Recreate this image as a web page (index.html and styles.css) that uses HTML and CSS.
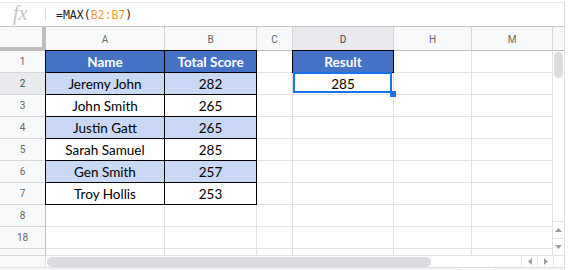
FILE: index.html
```html
<!DOCTYPE html>
<html lang="en">
<head>
  <meta charset="UTF-8">
  <meta name="viewport" content="width=device-width, initial-scale=1.0">
  <title>MAX Function</title>
  <link rel="stylesheet" href="styles.css">
</head>
<body>
  <div class="sheet">
    <div class="formula-bar">
      <span class="fx">fx</span>
      <span class="fx-sep"></span>
      <span class="formula">=MAX(<span class="ref">B2:B7</span>)</span>
    </div>

    <div class="sheet-body">
      <div class="grid">
        <!-- column headers -->
        <div class="corner"></div>
        <div class="ch">A</div>
        <div class="ch">B</div>
        <div class="ch">C</div>
        <div class="ch active">D</div>
        <div class="ch">H</div>
        <div class="ch">M</div>

        <!-- row 1 -->
        <div class="rh">1</div>
        <div class="cell t hd first top">Name</div>
        <div class="cell t hd top">Total Score</div>
        <div class="cell"></div>
        <div class="cell t hd first top">Result</div>
        <div class="cell"></div>
        <div class="cell"></div>

        <!-- row 2 -->
        <div class="rh active">2</div>
        <div class="cell t alt first">Jeremy John</div>
        <div class="cell t alt">282</div>
        <div class="cell"></div>
        <div class="cell selected">285</div>
        <div class="cell"></div>
        <div class="cell"></div>

        <!-- row 3 -->
        <div class="rh">3</div>
        <div class="cell t first">John Smith</div>
        <div class="cell t">265</div>
        <div class="cell"></div>
        <div class="cell"></div>
        <div class="cell"></div>
        <div class="cell"></div>

        <!-- row 4 -->
        <div class="rh">4</div>
        <div class="cell t alt first">Justin Gatt</div>
        <div class="cell t alt">265</div>
        <div class="cell"></div>
        <div class="cell"></div>
        <div class="cell"></div>
        <div class="cell"></div>

        <!-- row 5 -->
        <div class="rh">5</div>
        <div class="cell t first">Sarah Samuel</div>
        <div class="cell t">285</div>
        <div class="cell"></div>
        <div class="cell"></div>
        <div class="cell"></div>
        <div class="cell"></div>

        <!-- row 6 -->
        <div class="rh">6</div>
        <div class="cell t alt first">Gen Smith</div>
        <div class="cell t alt">257</div>
        <div class="cell"></div>
        <div class="cell"></div>
        <div class="cell"></div>
        <div class="cell"></div>

        <!-- row 7 -->
        <div class="rh">7</div>
        <div class="cell t first">Troy Hollis</div>
        <div class="cell t">253</div>
        <div class="cell"></div>
        <div class="cell"></div>
        <div class="cell"></div>
        <div class="cell"></div>

        <!-- row 8 -->
        <div class="rh">8</div>
        <div class="cell"></div>
        <div class="cell"></div>
        <div class="cell"></div>
        <div class="cell"></div>
        <div class="cell"></div>
        <div class="cell"></div>

        <!-- row 18 -->
        <div class="rh">18</div>
        <div class="cell"></div>
        <div class="cell"></div>
        <div class="cell"></div>
        <div class="cell"></div>
        <div class="cell"></div>
        <div class="cell"></div>

        <!-- partial row -->
        <div class="rh"></div>
        <div class="cell"></div>
        <div class="cell"></div>
        <div class="cell"></div>
        <div class="cell"></div>
        <div class="cell"></div>
        <div class="cell"></div>
      </div>

      <div class="vscroll">
        <div class="vscroll-head"></div>
        <div class="vscroll-track"><div class="vthumb"></div></div>
        <div class="sbtn">
          <svg width="7" height="4" viewBox="0 0 7 4"><polygon points="0,4 7,4 3.5,0" fill="#9aa0a6"/></svg>
        </div>
        <div class="sbtn">
          <svg width="7" height="4" viewBox="0 0 7 4"><polygon points="0,0 7,0 3.5,4" fill="#9aa0a6"/></svg>
        </div>
      </div>
    </div>

    <div class="hscroll">
      <div class="hscroll-left"></div>
      <div class="hscroll-track"><div class="hthumb"></div></div>
      <div class="hbtn">
        <svg width="4" height="7" viewBox="0 0 4 7"><polygon points="4,0 4,7 0,3.5" fill="#9aa0a6"/></svg>
      </div>
      <div class="hbtn">
        <svg width="4" height="7" viewBox="0 0 4 7"><polygon points="0,0 0,7 4,3.5" fill="#9aa0a6"/></svg>
      </div>
      <div class="hscroll-corner"></div>
    </div>

    <div class="tabs">
      <div class="tab-space"></div>
      <div class="tab"></div>
    </div>
  </div>
</body>
</html>
```

FILE: styles.css
```css
body {
  margin: 0;
  background: #fff;
}
.sheet {
  width: 564px;
  border-right: 1px solid #e0e0e0;
  font-family: Roboto, Arial, sans-serif;
}

/* Formula bar */
.formula-bar {
  display: flex;
  align-items: center;
  height: 27px;
  box-sizing: border-box;
  border-top: 1px solid #ececec;
  margin-top: 2px;
  height: 25px;
  border-bottom: 1px solid #c4c4c4;
}
.fx {
  width: 45px;
  box-sizing: border-box;
  padding-left: 13px;
  padding-bottom: 2px;
  font-family: "Liberation Serif", serif;
  font-style: italic;
  font-size: 20px;
  color: #c4c4c4;
}
.fx-sep {
  width: 1px;
  height: 12px;
  background: #dadce0;
}
.formula {
  margin-left: 10px;
  font-family: "DejaVu Sans Mono", monospace;
  font-size: 11.5px;
  color: #222;
}
.ref {
  color: #f09c34;
}

/* Grid */
.sheet-body {
  display: flex;
}
.grid {
  display: grid;
  grid-template-columns: 46px 119px 92px 36px 101px 78px 81px;
  grid-template-rows: 24px repeat(9, 22px) 7px;
}
.grid > div {
  box-sizing: border-box;
  display: flex;
  align-items: center;
  justify-content: center;
}
.corner {
  background: #f8f9fa;
  border-right: 4px solid #bdbdbd;
  border-bottom: 4px solid #bdbdbd;
}
.ch {
  background: #f8f9fa;
  border-right: 1px solid #d6d6d6;
  border-bottom: 1px solid #bdbdbd;
  font-size: 10px;
  color: #666;
  padding-top: 1px;
}
.rh {
  background: #f8f9fa;
  border-right: 1px solid #bdbdbd;
  border-bottom: 1px solid #d6d6d6;
  font-size: 10px;
  color: #666;
}
.ch.active, .rh.active {
  background: #e8eaed;
  color: #444;
}
.cell {
  border-right: 1px solid #e2e2e3;
  border-bottom: 1px solid #e2e2e3;
  font-family: Lato, "Open Sans", sans-serif;
  font-size: 13.5px;
  color: #000;
}

/* Table with black borders */
.cell.t {
  border-right-color: #000;
  border-bottom-color: #000;
}
.cell.first {
  box-shadow: -1px 0 0 #000;
}
.cell.top {
  box-shadow: 0 -1px 0 #000;
}
.cell.first.top {
  box-shadow: -1px 0 0 #000, 0 -1px 0 #000, -1px -1px 0 #000;
}
.cell.hd {
  background: #4472c4;
  color: #fff;
  font-weight: bold;
}
.cell.alt {
  background: #c9d9f5;
}

/* Selected cell */
.cell.selected {
  position: relative;
}
.cell.selected::before {
  content: "";
  position: absolute;
  left: 0;
  top: -1px;
  right: 1px;
  bottom: 1px;
  border: 2px solid #1a73e8;
}
.cell.selected::after {
  content: "";
  position: absolute;
  right: -3px;
  bottom: -3px;
  width: 6px;
  height: 6px;
  background: #1a73e8;
}

/* Vertical scrollbar */
.vscroll {
  width: 11px;
  display: flex;
  flex-direction: column;
  border-bottom: 1px solid #e2e2e3;
  box-sizing: border-box;
}
.vscroll-head {
  height: 24px;
  box-sizing: border-box;
  background: #f8f9fa;
  border-bottom: 1px solid #bdbdbd;
}
.vscroll-track {
  flex: 1;
  padding-top: 1px;
}
.vthumb {
  width: 9px;
  height: 26px;
  margin-left: 1px;
  border-radius: 5px;
  background: #dadce0;
}
.sbtn {
  height: 17px;
  box-sizing: border-box;
  border-top: 1px solid #e2e2e3;
  display: flex;
  align-items: center;
  justify-content: center;
}

/* Horizontal scrollbar */
.hscroll {
  display: flex;
  height: 11px;
}
.hscroll-left {
  width: 46px;
  box-sizing: border-box;
  background: #f8f9fa;
  border-right: 1px solid #e2e2e3;
}
.hscroll-track {
  width: 475px;
  padding-left: 1px;
  padding-top: 1px;
  box-sizing: border-box;
}
.hthumb {
  width: 384px;
  height: 10px;
  border-radius: 5px;
  background: #dadce0;
}
.hbtn {
  width: 16px;
  box-sizing: border-box;
  border-left: 1px solid #e2e2e3;
  display: flex;
  align-items: center;
  justify-content: center;
}
.hscroll-corner {
  width: 11px;
  box-sizing: border-box;
  border-left: 1px solid #e2e2e3;
}

/* Sheet tabs strip */
.tabs {
  display: flex;
  height: 4px;
  background: #f1f3f4;
  border-top: 1px solid #e0e0e0;
}
.tab-space {
  width: 462px;
}
.tab {
  width: 33px;
  background: #fff;
}
```
